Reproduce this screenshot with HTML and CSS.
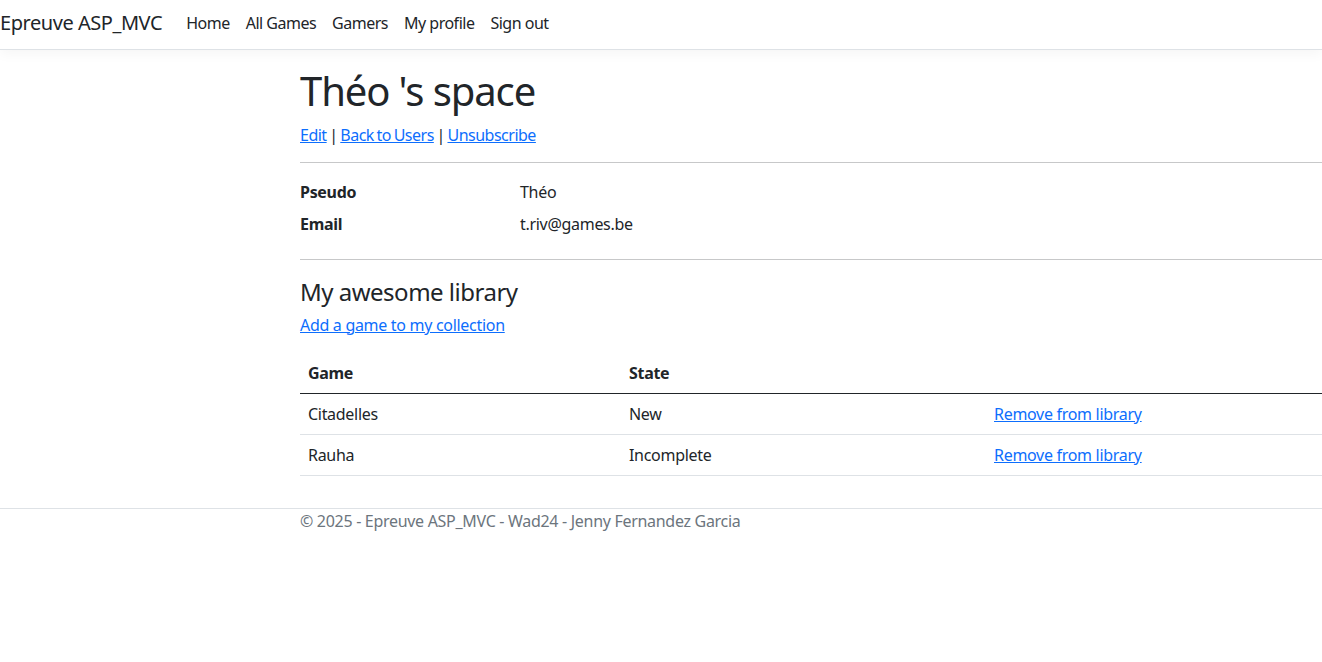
FILE: index.html
```html
<!DOCTYPE html>
<html lang="fr">
<head>
<meta charset="utf-8">
<title>Théo 's space - Epreuve ASP_MVC</title>
<link rel="stylesheet" href="styles.css">
</head>
<body>
<header>
  <nav class="navbar">
    <a class="brand" href="#">Epreuve ASP_MVC</a>
    <ul class="nav">
      <li><a class="nav-link" href="#">Home</a></li>
      <li><a class="nav-link" href="#">All Games</a></li>
      <li><a class="nav-link" href="#">Gamers</a></li>
      <li><a class="nav-link" href="#">My profile</a></li>
      <li><a class="nav-link" href="#">Sign out</a></li>
    </ul>
  </nav>
</header>
<div class="container">
  <main class="main">
    <h1 class="title">Théo 's space</h1>
    <p class="actions actions-top"><a href="#">Edit</a> | <a href="#">Back to Users</a> | <a href="#">Unsubscribe</a></p>
    <hr class="rule">
    <dl class="details">
      <dt class="label">Pseudo</dt>
      <dd class="value">Théo</dd>
      <dt class="label">Email</dt>
      <dd class="value">t.riv@games.be</dd>
    </dl>
    <hr class="rule rule-mid">
    <h4 class="subtitle">My awesome library</h4>
    <p class="actions"><a href="#">Add a game to my collection</a></p>
    <table class="table">
      <thead>
        <tr><th class="col-game">Game</th><th class="col-state">State</th><th></th></tr>
      </thead>
      <tbody>
        <tr><td>Citadelles</td><td>New</td><td><a href="#">Remove from library</a></td></tr>
        <tr><td>Rauha</td><td>Incomplete</td><td><a href="#">Remove from library</a></td></tr>
      </tbody>
    </table>
  </main>
</div>
<footer class="footer">
  <div class="container">© 2025 - Epreuve ASP_MVC - Wad24 - Jenny Fernandez Garcia</div>
</footer>
</body>
</html>
```

FILE: styles.css
```css
* { box-sizing: border-box; }
html, body { margin: 0; padding: 0; }
body {
  font-family: "Noto Sans", "Open Sans", sans-serif;
  font-size: 16px;
  line-height: 1.5;
  letter-spacing: -0.3px;
  color: #212529;
  background: #fff;
  overflow-x: hidden;
}
a { color: #0d6efd; }

.navbar {
  display: flex;
  align-items: center;
  height: 50px;
  border-bottom: 1px solid #dee2e6;
  box-shadow: 0 4px 12px rgba(0,0,0,.04);
  padding: 0 0 4px 0;
  margin-bottom: 17px;
}
.brand {
  font-size: 20px;
  letter-spacing: -0.45px;
  color: #212529;
  text-decoration: none;
  margin-right: 16px;
  line-height: 30px;
}
.nav {
  display: flex;
  list-style: none;
  margin: 0;
  padding: 0;
}
.nav-link {
  display: block;
  padding: 8px;
  letter-spacing: -0.5px;
  color: #212529;
  text-decoration: none;
}

.container { padding-left: 300px; padding-right: 0; }
.main { padding-bottom: 16px; }

.title {
  font-size: 40px;
  font-weight: 400;
  letter-spacing: -1.1px;
  line-height: 1.2;
  margin: 0 0 8px 0;
}
.actions { margin: 0 0 16px 0; }
.actions-top {
  margin-bottom: 15px;
  letter-spacing: -0.5px;
  word-spacing: -1px;
}
.rule {
  border: 0;
  border-top: 1px solid #212529;
  opacity: .25;
  margin: 12px 0 17px 0;
}
.rule-mid { margin-bottom: 16px; }
.details {
  display: grid;
  grid-template-columns: 220px 1fr;
  row-gap: 8px;
  margin: 0 0 23px 0;
}
.label { font-weight: 700; margin: 0; }
.value { margin: 0; }
.subtitle {
  font-size: 24px;
  font-weight: 400;
  letter-spacing: -0.5px;
  line-height: 1.2;
  padding-top: 2px;
  margin: 0 0 6px 0;
}
.table {
  width: 100%;
  border-collapse: collapse;
  margin-bottom: 16px;
}
.table th, .table td {
  padding: 8px;
  text-align: left;
  border-bottom: 1px solid #dee2e6;
  vertical-align: top;
}
.table th { font-weight: 700; border-bottom-color: #212529; }
.col-game { width: 321px; }
.col-state { width: 365px; }

.footer {
  border-top: 1px solid #dee2e6;
  color: #6c757d;
  line-height: 24px;
  padding-top: 0;
  white-space: nowrap;
}
```
